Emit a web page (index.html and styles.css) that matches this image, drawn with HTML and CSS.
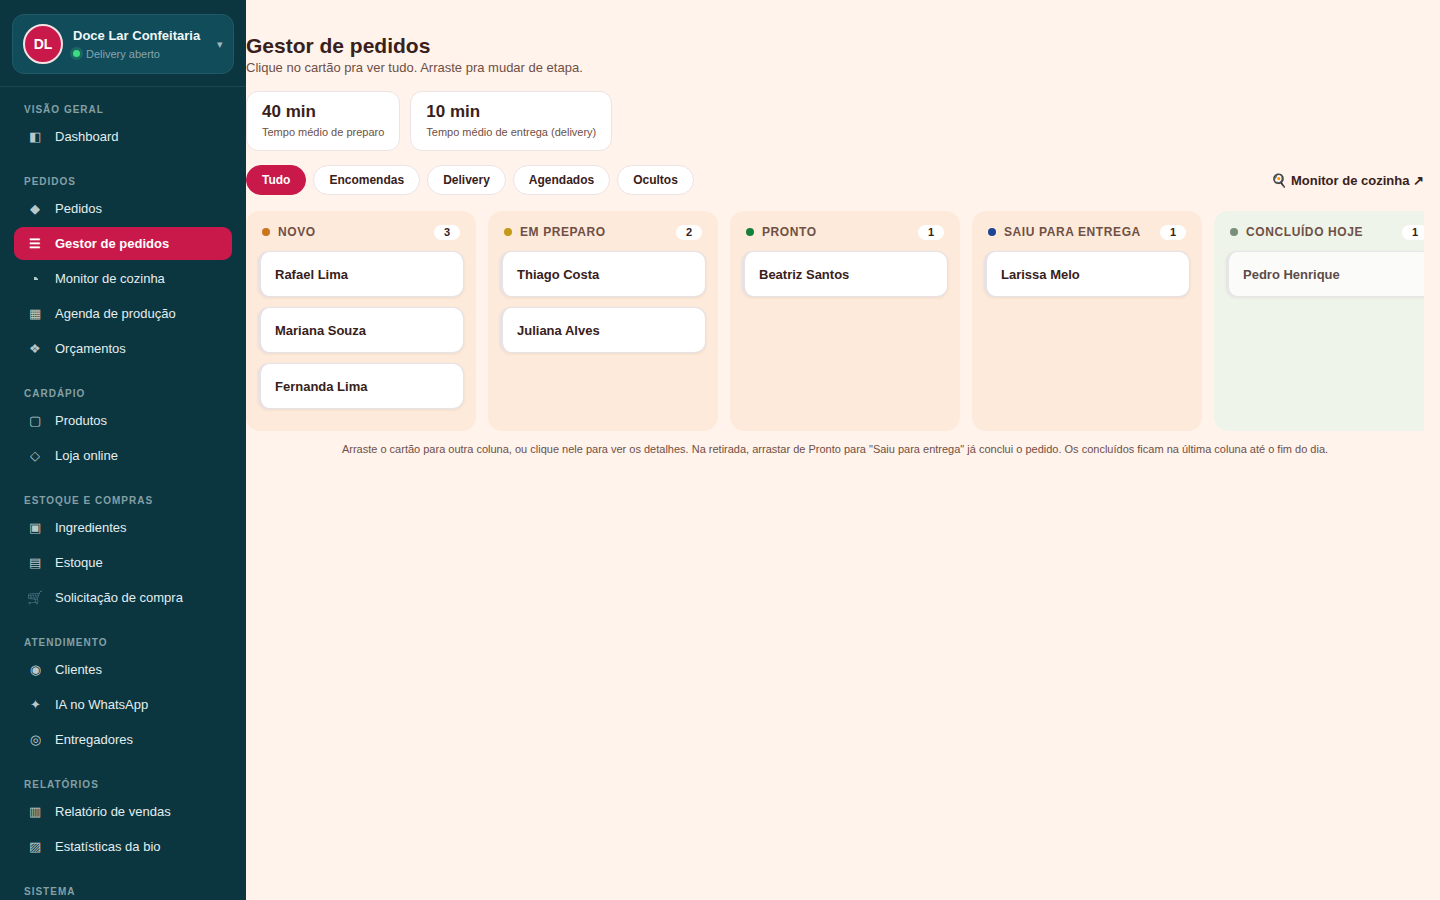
FILE: index.html
```html
<!DOCTYPE html>
<html lang="pt-BR">
<head>
    <meta charset="UTF-8">
    <meta name="viewport" content="width=device-width, initial-scale=1.0">
    <title>Gestor de pedidos</title>
    <link rel="stylesheet" href="styles.css">
</head>
<body>
    <div class="app">
        <aside class="sidebar">
            <div class="brand-wrap">
                <button class="brand" type="button">
                    <span class="avatar">DL</span>
                    <span class="brand-info">
                        <span class="brand-name">Doce Lar Confeitaria</span>
                        <span class="brand-status"><span class="status-dot"></span>Delivery aberto</span>
                    </span>
                    <span class="brand-caret">▾</span>
                </button>
            </div>

            <nav class="nav">
                <div class="nav-group">
                    <h2 class="nav-label">Visão geral</h2>
                    <a class="nav-item" href="#"><span class="nav-icon">◧</span>Dashboard</a>
                </div>

                <div class="nav-group">
                    <h2 class="nav-label">Pedidos</h2>
                    <a class="nav-item" href="#"><span class="nav-icon">◆</span>Pedidos</a>
                    <a class="nav-item active" href="#"><span class="nav-icon">☰</span>Gestor de pedidos</a>
                    <a class="nav-item" href="#">
                        <span class="nav-icon">
                            <svg width="18" height="14" viewBox="0 0 18 14" aria-hidden="true">
                                <path d="M8 5h2l2 2v1H8z" fill="currentColor"/>
                            </svg>
                        </span>Monitor de cozinha
                    </a>
                    <a class="nav-item" href="#"><span class="nav-icon">▦</span>Agenda de produção</a>
                    <a class="nav-item" href="#"><span class="nav-icon">❖</span>Orçamentos</a>
                </div>

                <div class="nav-group">
                    <h2 class="nav-label">Cardápio</h2>
                    <a class="nav-item" href="#"><span class="nav-icon">▢</span>Produtos</a>
                    <a class="nav-item" href="#"><span class="nav-icon">◇</span>Loja online</a>
                </div>

                <div class="nav-group">
                    <h2 class="nav-label">Estoque e compras</h2>
                    <a class="nav-item" href="#"><span class="nav-icon">▣</span>Ingredientes</a>
                    <a class="nav-item" href="#"><span class="nav-icon">▤</span>Estoque</a>
                    <a class="nav-item" href="#"><span class="nav-icon dim">🛒</span>Solicitação de compra</a>
                </div>

                <div class="nav-group">
                    <h2 class="nav-label">Atendimento</h2>
                    <a class="nav-item" href="#"><span class="nav-icon">◉</span>Clientes</a>
                    <a class="nav-item" href="#"><span class="nav-icon">✦</span>IA no WhatsApp</a>
                    <a class="nav-item" href="#"><span class="nav-icon">◎</span>Entregadores</a>
                </div>

                <div class="nav-group">
                    <h2 class="nav-label">Relatórios</h2>
                    <a class="nav-item" href="#"><span class="nav-icon">▥</span>Relatório de vendas</a>
                    <a class="nav-item" href="#"><span class="nav-icon">▨</span>Estatísticas da bio</a>
                </div>

                <div class="nav-group">
                    <h2 class="nav-label">Sistema</h2>
                </div>
            </nav>
        </aside>

        <main class="main">
            <h1 class="title">Gestor de pedidos</h1>
            <p class="subtitle">Clique no cartão pra ver tudo. Arraste pra mudar de etapa.</p>

            <div class="stats">
                <div class="stat">
                    <strong class="stat-value">40 min</strong>
                    <span class="stat-label">Tempo médio de preparo</span>
                </div>
                <div class="stat">
                    <strong class="stat-value">10 min</strong>
                    <span class="stat-label">Tempo médio de entrega (delivery)</span>
                </div>
            </div>

            <div class="toolbar">
                <div class="filters">
                    <button class="chip active" type="button">Tudo</button>
                    <button class="chip" type="button">Encomendas</button>
                    <button class="chip" type="button">Delivery</button>
                    <button class="chip" type="button">Agendados</button>
                    <button class="chip" type="button">Ocultos</button>
                </div>
                <a class="kitchen-link" href="#">🍳 Monitor de cozinha ↗</a>
            </div>

            <div class="board">
                <section class="column">
                    <header class="column-head">
                        <span class="dot orange"></span>
                        <h3 class="column-title">Novo</h3>
                        <span class="count">3</span>
                    </header>
                    <article class="card">Rafael Lima</article>
                    <article class="card">Mariana Souza</article>
                    <article class="card">Fernanda Lima</article>
                </section>

                <section class="column">
                    <header class="column-head">
                        <span class="dot yellow"></span>
                        <h3 class="column-title">Em preparo</h3>
                        <span class="count">2</span>
                    </header>
                    <article class="card">Thiago Costa</article>
                    <article class="card">Juliana Alves</article>
                </section>

                <section class="column">
                    <header class="column-head">
                        <span class="dot green"></span>
                        <h3 class="column-title">Pronto</h3>
                        <span class="count">1</span>
                    </header>
                    <article class="card">Beatriz Santos</article>
                </section>

                <section class="column">
                    <header class="column-head">
                        <span class="dot blue"></span>
                        <h3 class="column-title">Saiu para entrega</h3>
                        <span class="count">1</span>
                    </header>
                    <article class="card">Larissa Melo</article>
                </section>

                <section class="column done">
                    <header class="column-head">
                        <span class="dot gray"></span>
                        <h3 class="column-title">Concluído hoje</h3>
                        <span class="count">1</span>
                    </header>
                    <article class="card">Pedro Henrique</article>
                </section>
            </div>

            <p class="hint">Arraste o cartão para outra coluna, ou clique nele para ver os detalhes. Na retirada, arrastar de Pronto para "Saiu para entrega" já conclui o pedido. Os concluídos ficam na última coluna até o fim do dia.</p>
        </main>
    </div>
</body>
</html>
```
FILE: styles.css
```css
* {
    margin: 0;
    padding: 0;
    box-sizing: border-box;
}

body {
    font-family: "Liberation Sans", Arial, sans-serif;
    color: #38211b;
    background: #fff3ec;
}

button {
    font-family: inherit;
    cursor: pointer;
}

a {
    color: inherit;
    text-decoration: none;
}

.app {
    display: flex;
    height: 100vh;
}

/* Sidebar */
.sidebar {
    width: 246px;
    flex-shrink: 0;
    background: #0b353f;
    overflow: hidden;
}

.brand-wrap {
    padding: 14px 12px 12px;
    border-bottom: 1px solid #1a4650;
}

.brand {
    display: flex;
    align-items: center;
    gap: 10px;
    width: 100%;
    height: 60px;
    padding: 0 10px;
    background: #114c5b;
    border: 1px solid #215967;
    border-radius: 12px;
    text-align: left;
}

.avatar {
    display: flex;
    align-items: center;
    justify-content: center;
    width: 40px;
    height: 40px;
    flex-shrink: 0;
    border: 2px solid #f3e3e4;
    border-radius: 50%;
    background: #c9184a;
    color: #fff;
    font-size: 14px;
    font-weight: 700;
}

.brand-info {
    display: flex;
    flex-direction: column;
    flex: 1;
    gap: 3px;
    white-space: nowrap;
}

.brand-name {
    color: #eff7f7;
    font-size: 13px;
    line-height: 16px;
    font-weight: 700;
}

.brand-status {
    display: flex;
    align-items: center;
    gap: 6px;
    color: #86a5ad;
    font-size: 11px;
    line-height: 14px;
}

.status-dot {
    width: 7px;
    height: 7px;
    border-radius: 50%;
    background: #3ddc84;
    box-shadow: 0 0 0 3px rgba(61, 220, 132, 0.2);
}

.brand-caret {
    color: #a0b7bd;
    font-size: 11px;
}

.nav {
    padding: 0 14px;
}

.nav-group {
    margin-bottom: 6px;
}

.nav-label {
    padding: 17px 10px 4px;
    color: #84a0a5;
    font-size: 10px;
    line-height: 12px;
    font-weight: 700;
    letter-spacing: 1px;
    text-transform: uppercase;
}

.nav-item {
    display: flex;
    align-items: center;
    gap: 11px;
    height: 33px;
    margin-bottom: 2px;
    padding: 0 12px;
    border-radius: 9px;
    color: #e4eeee;
    font-size: 13px;
}

.nav-item.active {
    background: #c9184a;
    color: #fff;
    font-weight: 700;
}

.nav-icon {
    width: 18px;
    text-align: center;
    opacity: 0.8;
}

.nav-icon.dim {
    opacity: 0.6;
}

.nav-icon svg {
    display: block;
}

.nav-item.active .nav-icon {
    opacity: 1;
}

/* Content */
.main {
    flex: 1;
    min-width: 0;
    padding: 34px 16px 24px 0;
}

.title {
    font-size: 21px;
    line-height: 24px;
}

.subtitle {
    margin-top: 2px;
    color: #6e5046;
    font-size: 13px;
    line-height: 16px;
}

.stats {
    display: flex;
    gap: 10px;
    margin-top: 15px;
}

.stat {
    height: 60px;
    padding: 10px 15px;
    background: #fff;
    border: 1px solid #ece4e2;
    border-radius: 12px;
}

.stat-value {
    display: block;
    font-size: 17px;
    line-height: 20px;
}

.stat-label {
    display: block;
    margin-top: 3px;
    color: #6e5046;
    font-size: 11px;
    line-height: 14px;
}

.toolbar {
    display: flex;
    align-items: center;
    justify-content: space-between;
    margin: 14px 0 16px;
}

.filters {
    display: flex;
    gap: 7px;
}

.chip {
    height: 30px;
    padding: 0 15px;
    background: #fff;
    border: 1px solid #ece4e2;
    border-radius: 15px;
    color: #38211b;
    font-size: 12px;
    font-weight: 700;
}

.chip.active {
    background: #c9184a;
    border-color: #c9184a;
    color: #fff;
}

.kitchen-link {
    font-size: 13px;
    font-weight: 700;
}

.board {
    display: flex;
    gap: 12px;
    overflow: hidden;
}

.column {
    display: flex;
    flex-direction: column;
    gap: 10px;
    width: 230px;
    min-height: 220px;
    flex-shrink: 0;
    padding: 12px;
    background: #feeada;
    border-radius: 14px;
}

.column.done {
    background: #eef4ea;
}

.column-head {
    display: flex;
    align-items: center;
    gap: 8px;
    height: 18px;
    padding: 0 4px;
}

.dot {
    width: 8px;
    height: 8px;
    border-radius: 50%;
}

.orange {
    background: #cc741d;
}

.yellow {
    background: #c49a1a;
}

.green {
    background: #15803d;
}

.blue {
    background: #1e4594;
}

.gray {
    background: #7a8f7b;
}

.column-title {
    flex: 1;
    color: #6e5046;
    font-size: 12px;
    font-weight: 700;
    letter-spacing: 0.05em;
    text-transform: uppercase;
}

.count {
    padding: 0 10px;
    background: #fff;
    border-radius: 8px;
    font-size: 11px;
    line-height: 15px;
    font-weight: 700;
}

.card {
    padding: 15px 14px 13px;
    background: #fff;
    border: 1px solid #e6e2e6;
    border-left-width: 3px;
    border-radius: 11px;
    box-shadow: 0 1px 3px rgba(58, 32, 25, 0.08);
    font-size: 13px;
    line-height: 16px;
    font-weight: 700;
}

.done .card {
    opacity: 0.8;
}

.hint {
    margin-top: 11px;
    color: #6e5046;
    font-size: 11px;
    line-height: 14px;
    text-align: center;
}
```
